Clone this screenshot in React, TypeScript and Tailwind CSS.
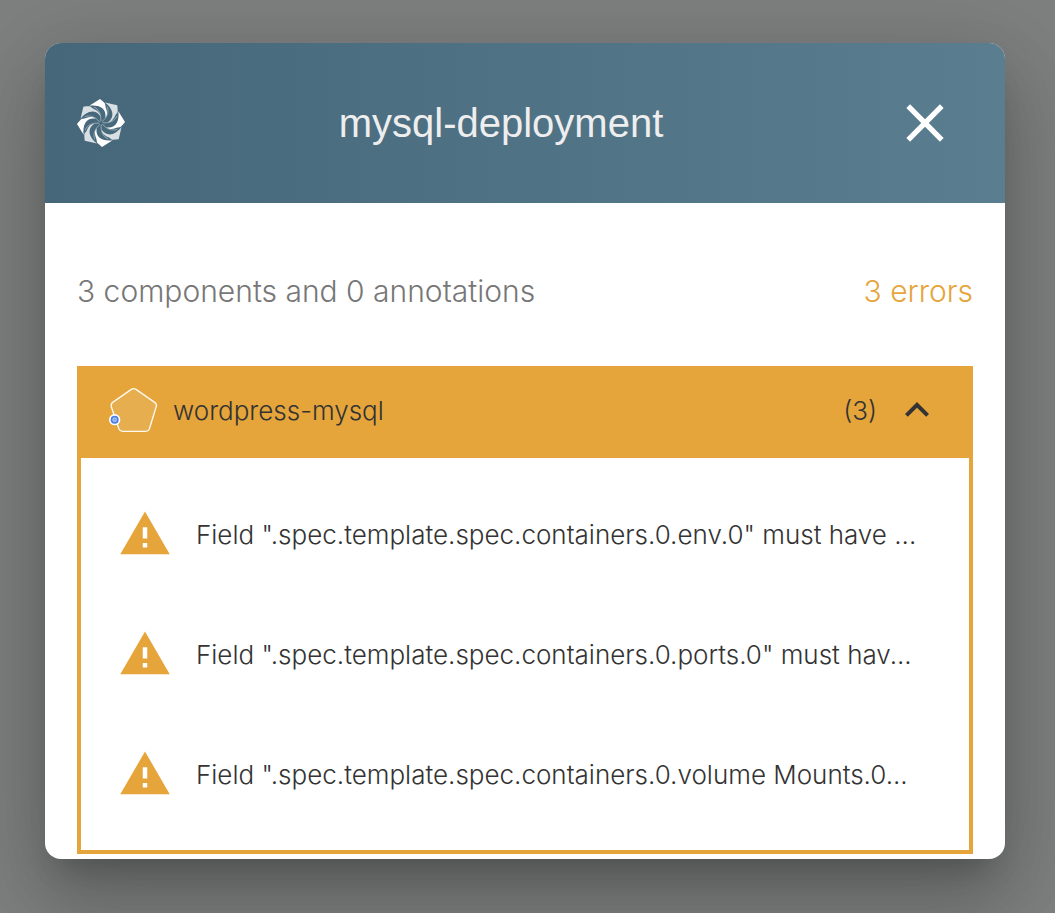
import { useState } from "react";

const errors = [
  'Field ".spec.template.spec.containers.0.env.0" must have ...',
  'Field ".spec.template.spec.containers.0.ports.0" must hav...',
  'Field ".spec.template.spec.containers.0.volume Mounts.0...',
];

const bladeAngles = [0, 45, 90, 135, 180, 225, 270, 315];

function Logo() {
  return (
    <svg viewBox="-72 -72 144 144" className="size-12 shrink-0" aria-hidden="true">
      {bladeAngles.map((angle, i) => (
        <path
          key={angle}
          d="M-3 -72 L-35 -52 C-6 -56 18 -44 13 -16 C22 -26 24 -38 19 -49 C15 -57 6 -65 -3 -72 Z"
          transform={`rotate(${angle})`}
          fill={i % 2 === 0 ? "#ffffff" : "#d8e0e4"}
        />
      ))}
      {bladeAngles.map((angle) => (
        <path
          key={angle}
          d="M-33 -50 C-4 -54 20 -42 9 -7 L2 -3 C3 -24 -6 -36 -23 -43 Z"
          transform={`rotate(${angle})`}
          fill="#48697c"
        />
      ))}
      {bladeAngles.map((angle) => (
        <path
          key={angle}
          d="M19 -49 C24 -34 20 -18 3 -4"
          transform={`rotate(${angle})`}
          fill="none"
          stroke="#b5c4cb"
          strokeWidth="2"
        />
      ))}
    </svg>
  );
}

function CloseIcon() {
  return (
    <svg viewBox="0 0 24 24" className="size-16" fill="currentColor" aria-hidden="true">
      <path d="M19 6.41 17.59 5 12 10.59 6.41 5 5 6.41 10.59 12 5 17.59 6.41 19 12 13.41 17.59 19 19 17.59 13.41 12z" />
    </svg>
  );
}

function DeploymentIcon() {
  return (
    <svg viewBox="0 0 150 138" className="h-[46px] w-[50px] shrink-0" aria-hidden="true">
      <path
        d="M67 7 Q74 3 81 7 L137 46 Q144 51 142 58 L121 126 Q118 133 111 133 H41 Q33 133 30 126 L7 60 Q5 51 11 46 Z"
        fill="#ffffff"
        fillOpacity="0.1"
        stroke="#fffaf0"
        strokeWidth="4"
        strokeLinejoin="round"
      />
      <circle cx="17" cy="98" r="17" fill="#ffffff" />
      <circle cx="17" cy="98" r="12" fill="#4a7de0" />
      <circle cx="17" cy="98" r="6" fill="#86abf0" stroke="#c7d9fa" strokeWidth="2" />
    </svg>
  );
}

function ChevronIcon({ open }: { open: boolean }) {
  return (
    <svg
      viewBox="0 0 24 24"
      className={open ? "size-12" : "size-12 rotate-180"}
      fill="currentColor"
      aria-hidden="true"
    >
      <path d="M12 8l-6 6 1.41 1.41L12 10.83l4.59 4.58L18 14z" />
    </svg>
  );
}

function WarningIcon() {
  return (
    <svg viewBox="0 0 24 24" className="size-[54px] shrink-0 text-[#e5a53b]" fill="currentColor" aria-hidden="true">
      <path d="M1 21h22L12 2 1 21zm12-3h-2v-2h2v2zm0-4h-2V9h2v5z" />
    </svg>
  );
}

export default function App() {
  const [open, setOpen] = useState(true);
  return (
    <div className="min-h-screen bg-[#7d807e] pb-[54px] pl-[45px] pr-[50px] pt-[43px] font-['Inter','Liberation_Sans',sans-serif] font-light max-sm:px-3">
      <div
        role="dialog"
        aria-labelledby="dialog-title"
        className="mx-auto max-w-[960px] rounded-2xl bg-white pb-[5px] shadow-[0_22px_30px_-14px_rgba(0,0,0,0.2),0_48px_76px_6px_rgba(0,0,0,0.14),0_18px_92px_16px_rgba(0,0,0,0.12)]"
      >
        <header className="flex items-center justify-between rounded-t-2xl bg-linear-to-r from-[#46677a] to-[#5a7d90] p-8">
          <Logo />
          <h1
            id="dialog-title"
            className="font-['Liberation_Sans',Arial,sans-serif] text-[40px] font-normal text-[#eeeeee]"
          >
            mysql-deployment
          </h1>
          <button type="button" aria-label="Close" className="p-4 text-white">
            <CloseIcon />
          </button>
        </header>
        <div className="px-8 pt-16">
          <div className="flex items-center justify-between text-[30px] leading-[48px]">
            <p className="text-[#777777]">3 components and 0 annotations</p>
            <p className="text-[#e5a53b]">3 errors</p>
          </div>
          <section className="mt-[51px] border-4 border-[#e5a53b]">
            <h2>
              <button
                type="button"
                aria-expanded={open}
                onClick={() => setOpen(!open)}
                className="flex w-full items-center bg-[#e5a53b] px-7 pb-6 pt-4 text-[26px] text-[#333333]"
              >
                <DeploymentIcon />
                <span className="ml-[14px]">wordpress-mysql</span>
                <span className="ml-auto mr-4">(3)</span>
                <ChevronIcon open={open} />
              </button>
            </h2>
            {open && (
              <ul className="py-4 text-[26px] text-[#333333]">
                {errors.map((text) => (
                  <li key={text} className="flex h-[120px] items-center gap-6 pl-[37px] pr-9">
                    <WarningIcon />
                    <span className="whitespace-nowrap">{text}</span>
                  </li>
                ))}
              </ul>
            )}
          </section>
        </div>
      </div>
    </div>
  );
}
